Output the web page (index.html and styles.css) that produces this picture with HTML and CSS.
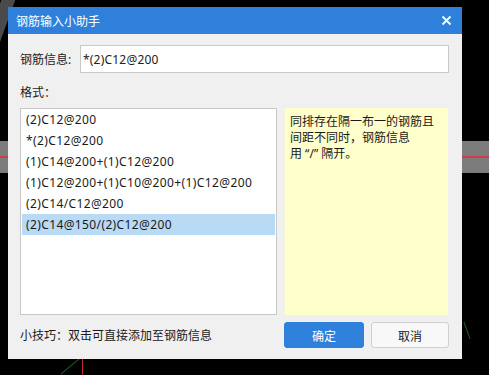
FILE: index.html
```html
<!DOCTYPE html>
<html lang="zh">
<head>
<meta charset="utf-8">
<link rel="stylesheet" href="styles.css">
</head>
<body>
<div class="canvas">
  <div class="bg-diag"></div>
  <div class="bg-band bg-band-left"></div>
  <div class="bg-band bg-band-right"></div>
  <div class="bg-red-v"></div>
  <div class="bg-green g1"></div>
  <div class="bg-green g2"></div>

  <div class="dialog">
    <div class="titlebar">
      <span class="title">钢筋输入小助手</span>
      <svg class="close" width="11" height="11" viewBox="0 0 11 11"><path d="M1.5 1.5L9.5 9.5M9.5 1.5L1.5 9.5" stroke="#fff" stroke-width="1.8" fill="none"/></svg>
    </div>
    <div class="content">
      <div class="row-info">
        <label class="label">钢筋信息:</label>
        <div class="input">*(2)C12@200</div>
      </div>
      <div class="fmt-label">格式：</div>
      <div class="panels">
        <ul class="list">
          <li>(2)C12@200</li>
          <li>*(2)C12@200</li>
          <li>(1)C14@200+(1)C12@200</li>
          <li>(1)C12@200+(1)C10@200+(1)C12@200</li>
          <li>(2)C14/C12@200</li>
          <li class="sel">(2)C14@150/(2)C12@200</li>
        </ul>
        <div class="note">同排存在隔一布一的钢筋且<br>间距不同时，钢筋信息<br>用 “/” 隔开。</div>
      </div>
      <div class="footer">
        <span class="tip">小技巧：双击可直接添加至钢筋信息</span>
        <div class="buttons">
          <button class="btn btn-ok">确定</button>
          <button class="btn btn-cancel">取消</button>
        </div>
      </div>
    </div>
  </div>
</div>
</body>
</html>
```
FILE: styles.css
```css
html, body {
  margin: 0;
  padding: 0;
  background: #000;
}
body {
  width: 489px;
  height: 375px;
  overflow: hidden;
  font-family: "Noto Sans", "Noto Sans CJK SC", sans-serif;
  font-size: 12px;
  color: #222;
}
.canvas {
  position: relative;
  width: 489px;
  height: 375px;
  padding: 7px 0 0 8px;
  box-sizing: border-box;
}
.bg-diag {
  position: absolute;
  left: -6px;
  top: -10px;
  width: 14px;
  height: 60px;
  background: #4a4a4a;
  transform: skewX(-20deg);
}
.bg-band {
  position: absolute;
  top: 141px;
  height: 32px;
  background: #7c7c7c;
}
.bg-band::after {
  content: "";
  position: absolute;
  left: 0;
  right: 0;
  top: 15px;
  height: 2px;
  background: #d03a4a;
}
.bg-band-left { left: 0; width: 8px; }
.bg-band-right { left: 462px; width: 27px; }
.bg-red-v {
  position: absolute;
  left: 82px;
  top: 358px;
  width: 1px;
  height: 17px;
  background: #c0283a;
}
.bg-green {
  position: absolute;
  height: 1px;
  background: #1f5a1f;
}
.g1 { left: 58px; top: 366px; width: 24px; transform: rotate(-40deg); }
.g2 { left: 458px; top: 330px; width: 18px; transform: rotate(70deg); }

.dialog {
  position: relative;
  width: 454px;
  height: 352px;
  background: #f0f0f0;
  display: flex;
  flex-direction: column;
}
.titlebar {
  height: 27px;
  background: #2f80da;
  display: flex;
  align-items: center;
  justify-content: space-between;
  padding: 0 10px 0 8px;
  flex-shrink: 0;
}
.title {
  color: #fff;
  font-size: 12px;
}
.close { display: block; }

.content {
  padding: 11px 13px 0 12px;
  display: flex;
  flex-direction: column;
}
.row-info {
  display: flex;
  align-items: center;
  height: 28px;
}
.label {
  width: 60px;
  flex-shrink: 0;
}
.input {
  flex: 1;
  height: 28px;
  box-sizing: border-box;
  background: #fff;
  border: 1px solid #c9c9c9;
  padding: 0 0 0 2px;
  display: flex;
  align-items: center;
  color: #222;
  letter-spacing: 0.2px;
}
.fmt-label {
  margin-top: 12px;
  line-height: 16px;
  height: 16px;
}
.panels {
  margin-top: 7px;
  display: flex;
  gap: 7px;
  height: 207px;
}
.list {
  list-style: none;
  margin: 0;
  width: 257px;
  box-sizing: border-box;
  background: #fff;
  border: 1px solid #c8c8c8;
  padding: 0 1px;
}
.list li {
  height: 21px;
  line-height: 21px;
  padding-left: 4px;
  white-space: nowrap;
  overflow: hidden;
  color: #1a1a1a;
  letter-spacing: 0.38px;
}
.list li.sel {
  background: #b8daf4;
}
.note {
  width: 164px;
  box-sizing: border-box;
  background: #ffffcc;
  border-left: 1px solid #f4f4e0;
  padding: 6px 0 0 5px;
  line-height: 16px;
  color: #1a1a1a;
}
.footer {
  margin-top: 7px;
  display: flex;
  align-items: center;
  justify-content: space-between;
  height: 26px;
}
.tip { color: #1a1a1a; }
.buttons {
  display: flex;
  gap: 7px;
}
.btn {
  font-family: "Noto Sans CJK SC", sans-serif;
  font-size: 12px;
  height: 26px;
  padding: 0;
  border-radius: 3px;
  cursor: default;
}
.btn-ok {
  width: 80px;
  background: #2f80da;
  border: 1px solid #2f80da;
  color: #fff;
}
.btn-cancel {
  width: 78px;
  background: #f8f8f8;
  border: 1px solid #cfcfcf;
  color: #222;
}
```
